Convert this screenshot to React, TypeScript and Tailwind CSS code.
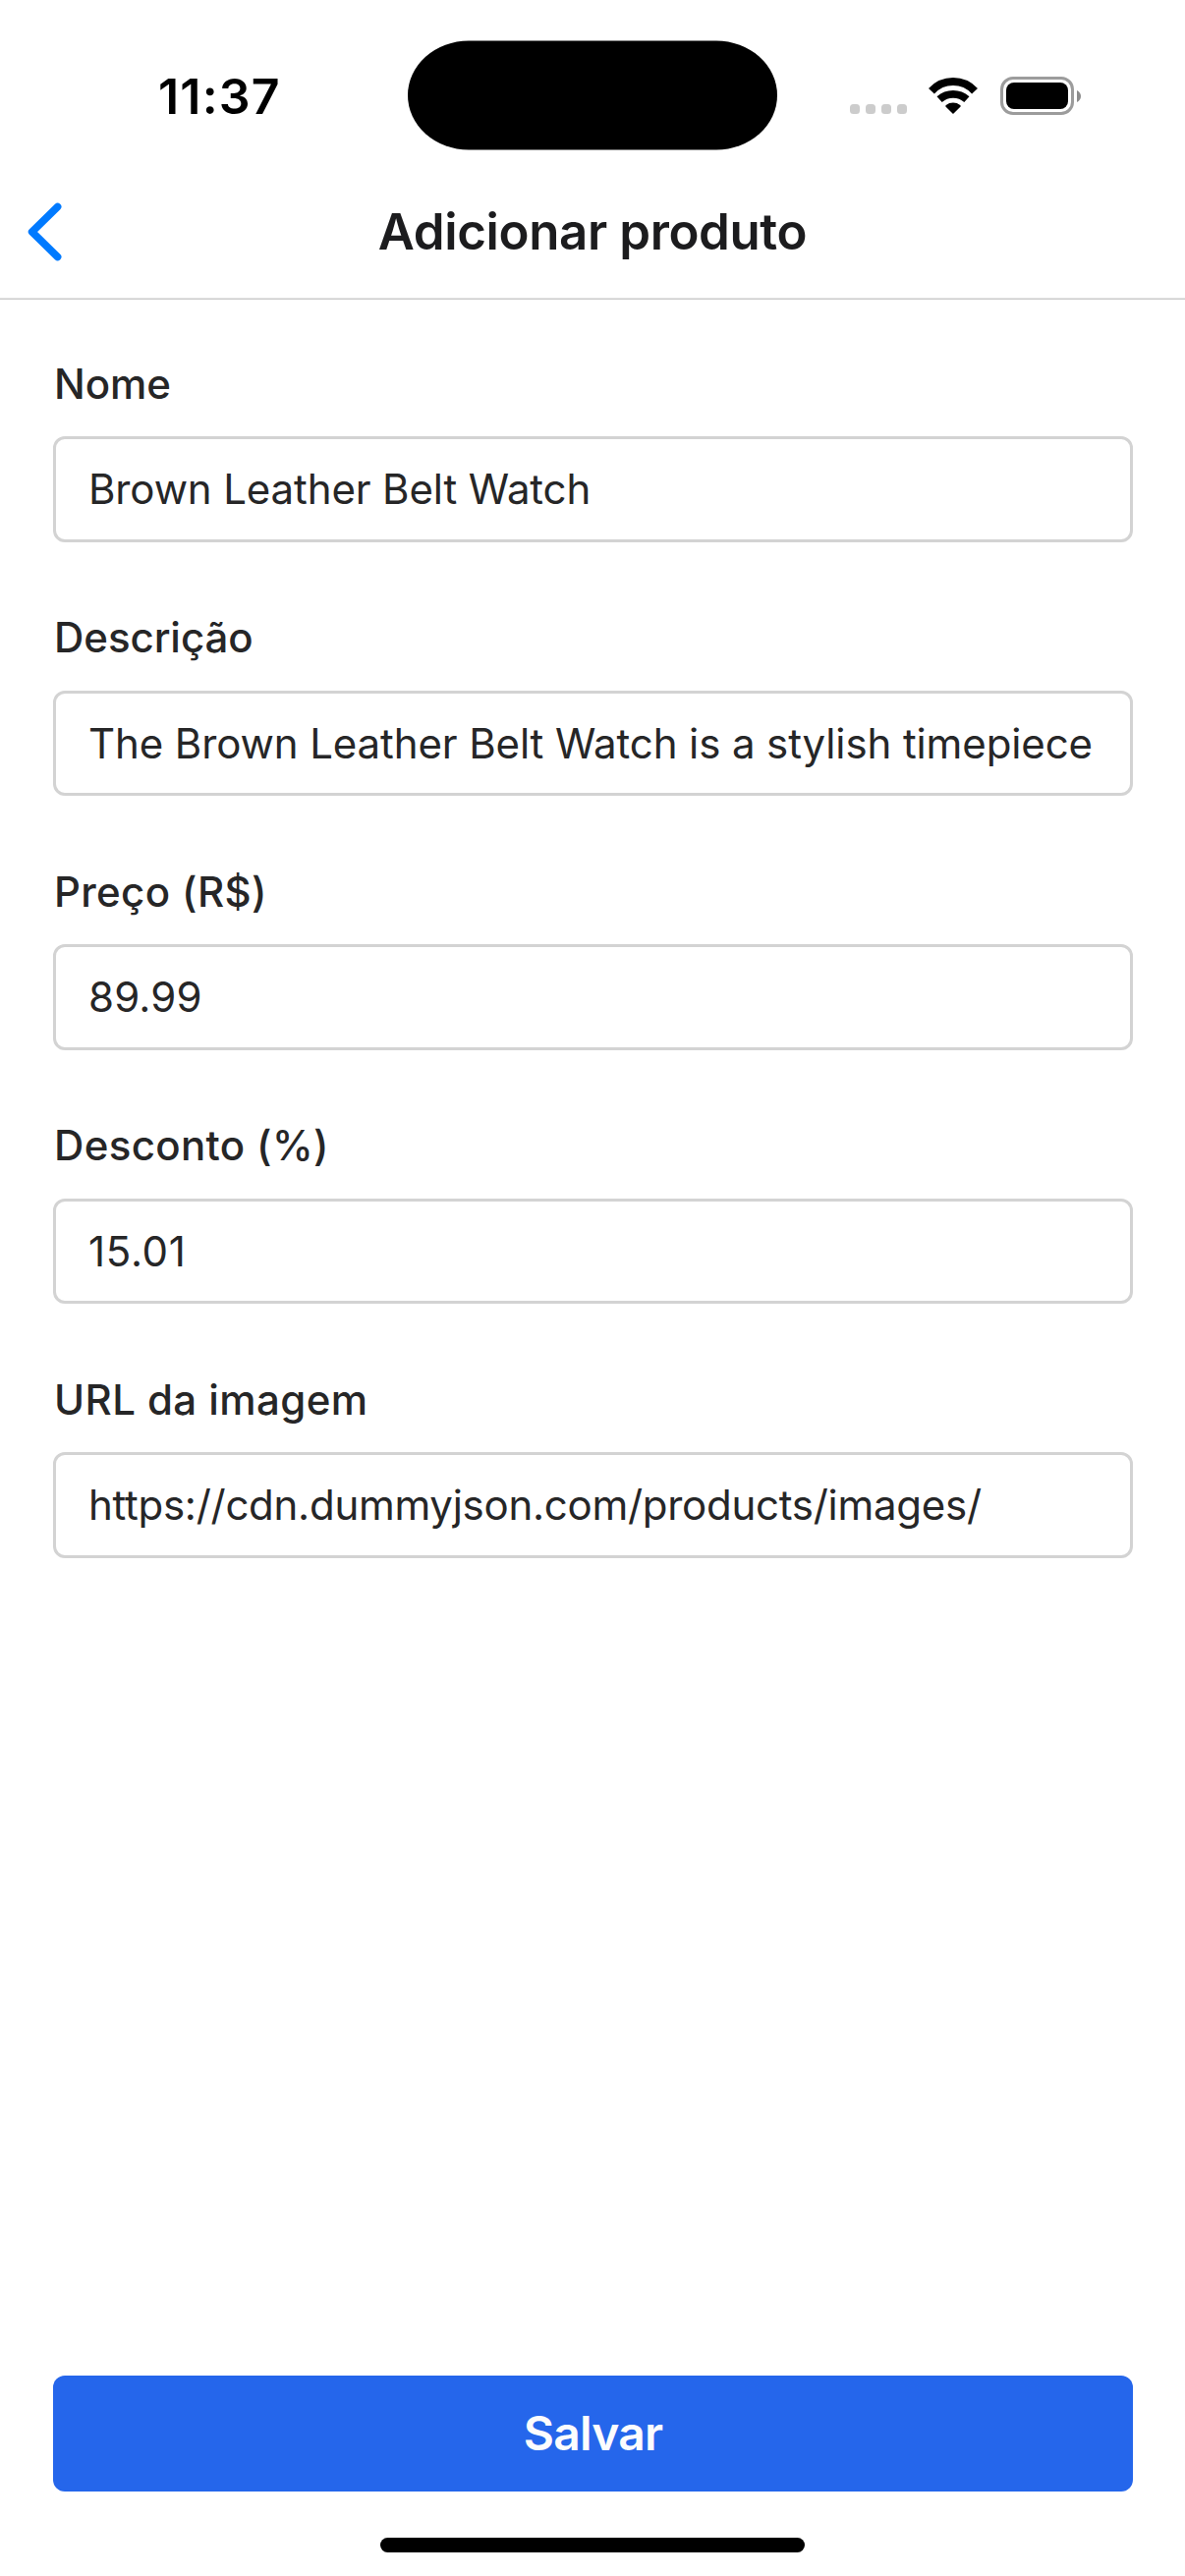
import React from "react";

type FieldProps = { id: string; label: string; value: string; labelClass: string; inputClass: string };

const fields: FieldProps[] = [
  { id: "name", label: "Nome", value: "Brown Leather Belt Watch", labelClass: "tracking-[-0.1px]", inputClass: "tracking-[-0.13px]" },
  {
    id: "description",
    label: "Descrição",
    value: "The Brown Leather Belt Watch is a stylish timepiece",
    labelClass: "tracking-[-0.05px]",
    inputClass: "tracking-[-0.11px]",
  },
  { id: "price", label: "Preço (R$)", value: "89.99", labelClass: "tracking-[0.35px]", inputClass: "tracking-[0.2px]" },
  { id: "discount", label: "Desconto (%)", value: "15.01", labelClass: "tracking-[0.35px]", inputClass: "tracking-[0.7px]" },
  {
    id: "image",
    label: "URL da imagem",
    value: "https://cdn.dummyjson.com/products/images/",
    labelClass: "tracking-[0.42px]",
    inputClass: "tracking-[-0.27px]",
  },
];

function WifiIcon() {
  return (
    <svg className="ml-[22px] h-[37px] w-[50px]" viewBox="0 0 50 37" fill="none" stroke="#000" strokeWidth="8">
      <path d="M2.96 13.8A29.9 29.9 0 0 1 47.04 13.8" />
      <path d="M11.1 22.2A20.9 20.9 0 0 1 38.9 22.2" strokeWidth="7.8" />
      <path d="M25 37L17.4 29.6Q17 28.6 17.8 28A12 12 0 0 1 32.2 28Q33 28.6 32.6 29.6Z" fill="#000" stroke="none" />
    </svg>
  );
}

function Battery() {
  return (
    <div className="ml-[23px] flex items-center">
      <div className="h-[39px] w-[75px] rounded-[13px] border-[3px] border-[#9c9c9c] p-[3px]">
        <div className="h-full w-full rounded-[8px] bg-black" />
      </div>
      <svg className="ml-[3px] h-[12px] w-[4px]" viewBox="0 0 4 12">
        <path d="M0 0C2.4 1 4 3.4 4 6S2.4 11 0 12Z" fill="#8c8c8c" />
      </svg>
    </div>
  );
}

function StatusBar() {
  return (
    <div className="flex h-[169px] items-center pt-[26px] pl-[161px]">
      <time className="w-[254px] text-[50px] leading-[60px] font-semibold tracking-[1.2px] text-black">11:37</time>
      <div className="h-[111px] w-[376px] -translate-y-[0.5px] rounded-[62px/55.5px] bg-black" />
      <div className="ml-[74px] flex items-center">
        <div className="flex h-[37px] items-end gap-[6px]">
          {[0, 1, 2, 3].map((dot) => (
            <span key={dot} className="size-[10px] rounded-[3.5px] bg-[#cccccc]" />
          ))}
        </div>
        <WifiIcon />
        <Battery />
      </div>
    </div>
  );
}

function Header() {
  return (
    <header className="grid h-[136px] grid-cols-[1fr_auto_1fr] items-center border-b border-[#cccccc] pb-px shadow-[inset_0_-1px_0_#e2e2e2]">
      <button type="button" aria-label="Voltar" className="pl-7">
        <svg className="h-[60px] w-[36px]" viewBox="0 0 36 60" fill="none">
          <path d="M30.6 4.5L4.6 30L30.6 55.5" stroke="#007aff" strokeWidth="7.6" strokeLinecap="round" strokeLinejoin="round" />
        </svg>
      </button>
      <h1 className="text-[51px] leading-[60px] font-semibold tracking-[-0.38px] text-[#1c1c1e]">Adicionar produto</h1>
    </header>
  );
}

function Field({ id, label, value, labelClass, inputClass }: FieldProps) {
  return (
    <div className="flex flex-col gap-[23.3px] text-[42px] text-[#262627]">
      <label htmlFor={id} className={`h-[60px] pl-px leading-[60.6px] font-medium ${labelClass}`}>
        {label}
      </label>
      <input
        id={id}
        defaultValue={value}
        className={`h-[107.8px] w-full rounded-[12px] border-[3px] border-[#d3d3d3] bg-white px-[33px] pb-px outline-none ${inputClass}`}
      />
    </div>
  );
}

export default function App() {
  return (
    <div className="flex h-[2622px] w-[1206px] flex-col overflow-hidden bg-white font-['Inter',sans-serif] antialiased">
      <StatusBar />
      <Header />
      <form className="flex flex-1 flex-col pr-[53px] pl-[54px]">
        <div className="flex flex-col gap-[67.45px] pt-[55.8px]">
          {fields.map((field) => (
            <Field key={field.id} {...field} />
          ))}
        </div>
        <button
          type="button"
          className="mt-auto h-[118px] rounded-[12px] bg-[#2566eb] text-[48px] font-semibold tracking-[-0.8px] text-[#fcfcfd]"
        >
          Salvar
        </button>
      </form>
      <div className="mt-[47px] mb-[24px] h-[15px] w-[432px] self-center rounded-full bg-black" />
    </div>
  );
}
